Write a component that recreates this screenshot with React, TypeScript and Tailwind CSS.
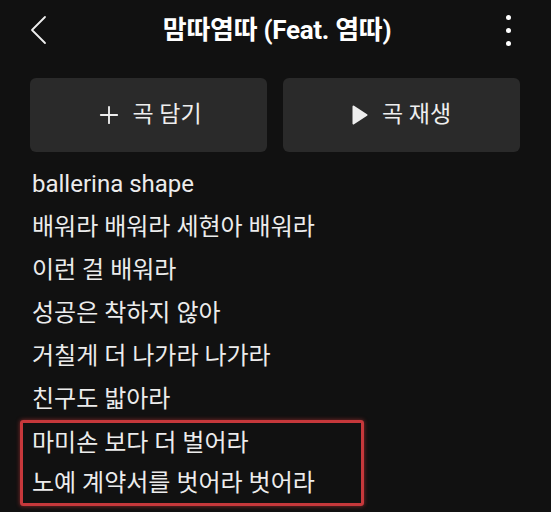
import { Plus, Play } from "lucide-react";

const lyrics = [
  "ballerina shape",
  "배워라 배워라 세현아 배워라",
  "이런 걸 배워라",
  "성공은 착하지 않아",
  "거칠게 더 나가라 나가라",
  "친구도 밟아라",
];

const marked = ["마미손 보다 더 벌어라", "노예 계약서를 벗어라 벗어라"];

const font = { fontFamily: "Roboto, 'Noto Sans CJK KR', sans-serif" };

export default function App() {
  return (
    <div className="w-[551px] h-[512px] overflow-hidden bg-[#111111] text-[#ececec]" style={font}>
      {/* Header */}
      <div className="h-[60px] flex items-center justify-between pl-[30px] pr-[40px]">
        <svg width="18" height="30" viewBox="0 0 18 30" className="text-[#eeeeee]">
          <path d="M15 2 L2 15 L15 28" fill="none" stroke="currentColor" strokeWidth="1.8" strokeLinecap="round" strokeLinejoin="round" />
        </svg>
        <h1 className="text-[26px] font-bold tracking-[-0.3px] text-white">맘따염따 (Feat. 염따)</h1>
        <div className="flex flex-col items-center gap-[8px] w-[5px]">
          <span className="w-[5px] h-[5px] rounded-full bg-white" />
          <span className="w-[5px] h-[5px] rounded-full bg-white" />
          <span className="w-[5px] h-[5px] rounded-full bg-white" />
        </div>
      </div>

      {/* Action buttons */}
      <div className="mt-[18px] px-[30px] flex gap-[16px]">
        <button className="w-[237px] h-[74px] rounded-[6px] bg-[#2a2a2a] flex items-center justify-center gap-[9px] text-[23px] text-[#eeeeee]">
          <Plus size={28} strokeWidth={1.6} />
          <span>곡 담기</span>
        </button>
        <button className="w-[237px] h-[74px] rounded-[6px] bg-[#2a2a2a] flex items-center justify-center gap-[14px] text-[23px] text-[#eeeeee]">
          <svg width="16" height="20" viewBox="0 0 16 20">
            <path d="M1.5 1.5 L14.5 10 L1.5 18.5 Z" fill="currentColor" stroke="currentColor" strokeWidth="2" strokeLinejoin="round" />
          </svg>
          <span>곡 재생</span>
        </button>
      </div>

      {/* Lyrics */}
      <div className="mt-[10px] pl-[32px] text-[24px]">
        {lyrics.map((line, i) => (
          <div key={i} className="h-[43px] flex items-center whitespace-nowrap">
            {line}
          </div>
        ))}
        <div className="ml-[-12px] w-[344px] pl-[9px] border-[3px] border-[#c6383b] rounded-[3px] shadow-[0_0_4px_rgba(220,60,60,0.6)]">
          {marked.map((line, i) => (
            <div key={i} className="h-[40px] flex items-center whitespace-nowrap">
              {line}
            </div>
          ))}
        </div>
      </div>
    </div>
  );
}
